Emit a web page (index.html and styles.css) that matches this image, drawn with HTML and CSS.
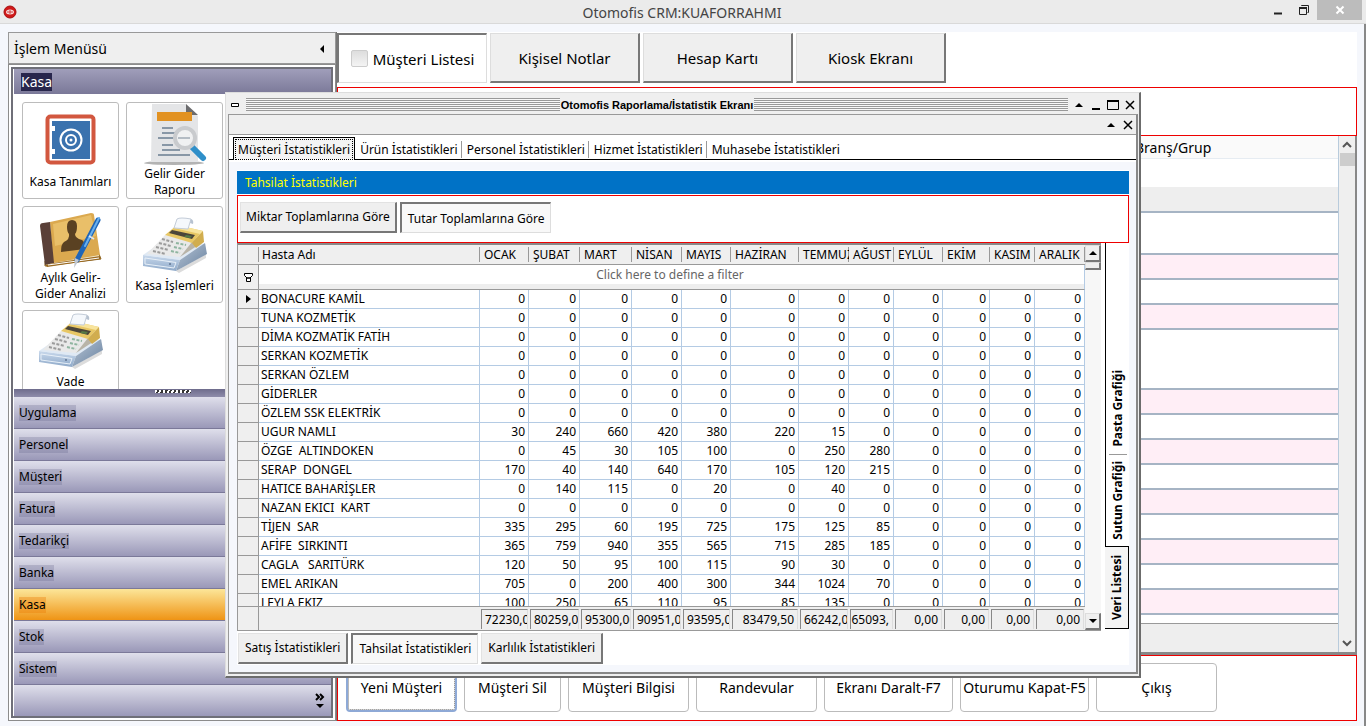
FILE: index.html
```
<!DOCTYPE html>
<html lang="tr">
<head>
    <meta charset="UTF-8">
    <meta name="viewport" content="width=device-width, initial-scale=1.0">
    <link rel="stylesheet" href="styles.css">
    <title>Otomofis CRM</title>
</head>
<body>
    <!-- Ortak ikonlar -->
    <svg class="sprites" aria-hidden="true">
        <defs>
            <linearGradient id="baseFront" x1="0" y1="0" x2="0" y2="1">
                <stop offset="0" stop-color="#c9d9ec"/>
                <stop offset="1" stop-color="#8ea9c9"/>
            </linearGradient>
            <linearGradient id="baseSide" x1="0" y1="0" x2="1" y2="1">
                <stop offset="0" stop-color="#b9c6d6"/>
                <stop offset="1" stop-color="#67819f"/>
            </linearGradient>
            <symbol id="icon-register" viewBox="0 0 64 64">
                <path d="M33 57 L63 40 L63 44 L36 59z" fill="#dcdcdc"/>
                <path d="M0 41 L22 26 L63 30 L37 46z" fill="#dfe9f4"/>
                <path d="M0 41 L37 46 L33 57 L0 52z" fill="url(#baseFront)"/>
                <path d="M37 46 L62 29 L64 40 L33 57z" fill="url(#baseSide)"/>
                <path d="M2 44 L33 48.500 L31 54 L2 50z" fill="none" stroke="#e8f0f8"/>
                <circle cx="27" cy="50" r="1" fill="#5f7590"/>
                <path d="M4 40 L22 21 L49 28 L37 43z" fill="#e9e9e9"/>
                <path d="M37 43 L49 28 L60 18 L60 28z" fill="#b9b4a8"/>
                <path d="M22 21 L34 11 L60 17 L49 29z" fill="#e8c765"/>
                <path d="M34 11 L60 17 L57 20 L31 14z" fill="#f8e49d"/>
                <path d="M26 19 L29 16 L52 21 L49 25z" fill="#4c463a"/>
                <path d="M43 21 L49 22 L47 24 L41 23z" fill="#567a46"/>
                <path d="M49 29 L60 17 L61 28 L53 34z" fill="#d1ad4e"/>
                <path d="M31 14 L34 5 Q37 3 48 5 L45 15z" fill="#f5f8fc" stroke="#c3ccd8"/>
                <path d="M48 5 Q51 6 50 10 L47 9" fill="#b7c2d0"/>
                <g stroke="#9b9b9b" stroke-width="2" stroke-dasharray="3 1.500">
                    <path d="M19 25 L30 28"/>
                    <path d="M16 29 L28 32"/>
                    <path d="M13 33 L26 36"/>
                    <path d="M10 37 L23 40"/>
                </g>
                <g stroke="#8fb5a0" stroke-width="2" stroke-dasharray="3 1.500">
                    <path d="M33 29 L43 31"/>
                    <path d="M31 33 L40 35"/>
                    <path d="M28 37 L37 39"/>
                </g>
            </symbol>
        </defs>
    </svg>

    <!-- Başlık çubuğu -->
    <header class="titlebar">
        <svg class="app-icon" viewBox="0 0 14 14" aria-hidden="true">
            <circle cx="7" cy="7" r="6" fill="#d01818" stroke="#a80c0c"/>
            <path d="M3 7 Q3 4.500 7 4.500 T11 7 Q11 9.500 7 9.500 T3 7z" fill="#f6d8d8"/>
            <path d="M4 7h6M7 5v4" stroke="#d04040"/>
        </svg>
        <h1>Otomofis CRM:KUAFORRAHMI</h1>
        <div class="titlebar-buttons">
            <button type="button" aria-label="Küçült">
                <svg viewBox="0 0 12 12"><path d="M2 9.500h8" stroke="#222" stroke-width="2"/></svg>
            </button>
            <button type="button" aria-label="Önceki boyut">
                <svg viewBox="0 0 12 12"><path d="M1.500 4h7v6.500h-7zM3.500 2V1.500h7V8.500h-1" fill="none" stroke="#222"/><path d="M1 4h8" stroke="#222" stroke-width="2"/></svg>
            </button>
            <button type="button" class="close" aria-label="Kapat">
                <svg viewBox="0 0 12 12"><path d="M2.500 2.500l7 7M9.500 2.500l-7 7" stroke="#fff" stroke-width="2"/></svg>
            </button>
        </div>
    </header>

    <div class="workspace">
        <!-- Sol menü -->
        <aside class="sidebar">
            <div class="sidebar-title">
                <span>İşlem Menüsü</span>
                <svg viewBox="0 0 6 8" aria-hidden="true"><path d="M5 0v8L1 4z"/></svg>
            </div>
            <div class="sidebar-body">
                <h2 class="group-title"><span>Kasa</span></h2>
                <div class="tiles">
                    <button type="button" class="tile">
                        <svg viewBox="0 0 64 64" aria-hidden="true">
                            <rect x="8.500" y="6.500" width="46" height="46" rx="3" fill="#fff" stroke="#d2573f" stroke-width="4"/>
                            <path d="M13 11h38v38H13v-5h3v-5h-3V21h3v-5h-3z" fill="#3a72ae"/>
                            <circle cx="32" cy="30" r="10.500" fill="none" stroke="#fff" stroke-width="2"/>
                            <circle cx="32" cy="30" r="5" fill="none" stroke="#fff" stroke-width="2"/>
                            <circle cx="32" cy="30" r="1.500" fill="#fff"/>
                        </svg>
                        <span>Kasa Tanımları</span>
                    </button>
                    <button type="button" class="tile">
                        <svg viewBox="0 0 64 64" aria-hidden="true">
                            <ellipse cx="31" cy="61" rx="30" ry="2" fill="#b3b3b3"/>
                            <path d="M9 2h34l12 12v46H8z" fill="#e4e5e7"/>
                            <path d="M43 2v11h12z" fill="#6c6c6e"/>
                            <path d="M14 10h35v9H14z" fill="#e29222"/>
                            <path d="M19 26h11M19 31h14M15 36h18M19 43h11M19 48h18M15 53h32" stroke="#8897a6" stroke-width="2"/>
                            <path d="M49 45L60 56" stroke="#2f8fc9" stroke-width="6" stroke-linecap="round"/>
                            <circle cx="42" cy="36" r="10" fill="#f0f1f2" stroke="#c9cbce" stroke-width="4"/>
                            <path d="M35 36h12" stroke="#b4bcc4" stroke-width="2"/>
                        </svg>
                        <span>Gelir Gider Raporu</span>
                    </button>
                    <button type="button" class="tile">
                        <svg viewBox="0 0 64 64" aria-hidden="true">
                            <path d="M6 60L62 53L60 48L6 55z" fill="#f3ead0" stroke="#8a6426"/>
                            <path d="M11 16L52 7Q55 7 55 9L61 49L14 57z" fill="#dba94f"/>
                            <path d="M14 18L52 9L57 30L16 40z" fill="#e9bf69"/>
                            <path d="M1 20Q1 17 4 17L11 16L15 57L6 59z" fill="#5a4038"/>
                            <path d="M6 59L15 57L61 50L62 53L8 61z" fill="#9b6a20"/>
                            <path d="M9 59L60 52" stroke="#fff" stroke-width="1"/>
                            <path d="M28 21Q28 14 33 14T38 20Q38 26 36 28Q36 32 43 34Q46 36 46 43L22 46Q22 38 25 36Q31 33 30 28Q28 26 28 21z" fill="#5a4122"/>
                            <path d="M59 14L38 54" stroke="#1f66b8" stroke-width="5" stroke-linecap="round"/>
                            <path d="M60 12L46 40" stroke="#69b0ee" stroke-width="2" stroke-linecap="round"/>
                            <path d="M50 30l5 3" stroke="#dfe6ee" stroke-width="2"/>
                            <path d="M36 52l4 2L35 62z" fill="#c2c8d0"/>
                        </svg>
                        <span>Aylık Gelir-Gider Analizi</span>
                    </button>
                    <button type="button" class="tile">
                        <svg aria-hidden="true"><use href="#icon-register"/></svg>
                        <span>Kasa İşlemleri</span>
                    </button>
                    <button type="button" class="tile two-lines">
                        <svg aria-hidden="true"><use href="#icon-register"/></svg>
                        <span>Vade</span>
                    </button>
                </div>
                <div class="splitter"></div>
                <nav class="groups">
                    <a href="#uygulama"><span>Uygulama</span></a>
                    <a href="#personel"><span>Personel</span></a>
                    <a href="#musteri"><span>Müşteri</span></a>
                    <a href="#fatura"><span>Fatura</span></a>
                    <a href="#tedarikci"><span>Tedarikçi</span></a>
                    <a href="#banka"><span>Banka</span></a>
                    <a href="#kasa" class="active"><span>Kasa</span></a>
                    <a href="#stok"><span>Stok</span></a>
                    <a href="#sistem"><span>Sistem</span></a>
                </nav>
                <div class="groups-more">
                    <button type="button" aria-label="Diğer">
                        <svg viewBox="0 0 10 16"><path d="M1 1l3 3-3 3M5 1l3 3-3 3" fill="none" stroke="#000" stroke-width="2"/><path d="M1 11h8l-4 4z"/></svg>
                    </button>
                </div>
            </div>
        </aside>

        <!-- Müşteri listesi -->
        <main class="main">
            <div class="main-tabs">
                <button type="button" class="active"><i class="tab-box"></i>Müşteri Listesi</button>
                <button type="button">Kişisel Notlar</button>
                <button type="button">Hesap Kartı</button>
                <button type="button">Kiosk Ekranı</button>
            </div>
            <div class="search-panel"></div>
            <div class="customers">
                <div class="customers-view">
                    <table class="customer-table">
                        <thead>
                            <tr><th></th><th class="branch">Branş/Grup</th></tr>
                        </thead>
                        <tbody>
                            <tr class="filter"><td></td><td></td></tr>
                            <tr class="group"><td></td><td></td></tr>
                            <tr class="medium"><td></td><td></td></tr>
                            <tr class="pink"><td></td><td></td></tr>
                            <tr><td></td><td></td></tr>
                            <tr class="pink"><td></td><td></td></tr>
                            <tr class="tall"><td></td><td></td></tr>
                            <tr class="pink"><td></td><td></td></tr>
                            <tr><td></td><td></td></tr>
                            <tr class="pink"><td></td><td></td></tr>
                            <tr><td></td><td></td></tr>
                            <tr class="pink"><td></td><td></td></tr>
                            <tr><td></td><td></td></tr>
                            <tr class="pink"><td></td><td></td></tr>
                            <tr><td></td><td></td></tr>
                            <tr class="pink"><td></td><td></td></tr>
                        </tbody>
                    </table>
                    <div class="customer-footer"></div>
                </div>
                <div class="scroll-flat">
                    <svg viewBox="0 0 10 8"><path d="M1 6l4-4 4 4" fill="none" stroke="#555" stroke-width="2"/></svg>
                    <i class="thumb"></i>
                    <svg class="down" viewBox="0 0 10 8"><path d="M1 2l4 4 4-4" fill="none" stroke="#555" stroke-width="2"/></svg>
                </div>
            </div>
            <div class="actions">
                <button type="button" class="focused">Yeni Müşteri</button>
                <button type="button" class="narrow">Müşteri Sil</button>
                <button type="button">Müşteri Bilgisi</button>
                <button type="button">Randevular</button>
                <button type="button" class="wide">Ekranı Daralt-F7</button>
                <button type="button" class="wide">Oturumu Kapat-F5</button>
                <button type="button">Çıkış</button>
            </div>
        </main>
    </div>

    <!-- Rapor penceresi -->
    <section class="window">
        <div class="window-title">
            <svg class="sys" viewBox="0 0 8 4" aria-hidden="true"><path d="M.5.5h7v3h-7z" fill="#fff" stroke="#000"/></svg>
            <i class="stripes"></i>
            <h2>Otomofis Raporlama/İstatistik Ekranı</h2>
            <i class="stripes"></i>
            <button type="button" aria-label="Topla"><svg viewBox="0 0 12 12"><path d="M2 8h8L6 4z"/></svg></button>
            <button type="button" aria-label="Küçült"><svg viewBox="0 0 12 12"><path d="M2 10h8" stroke="#000" stroke-width="2"/></svg></button>
            <button type="button" aria-label="Büyüt"><svg viewBox="0 0 12 12"><path d="M.5 1.500h11v9H.5z" fill="none" stroke="#000"/><path d="M0 2h12" stroke="#000" stroke-width="2"/></svg></button>
            <button type="button" aria-label="Kapat"><svg viewBox="0 0 12 12"><path d="M2 2l8 8M10 2l-8 8" stroke="#000" stroke-width="1.500"/></svg></button>
        </div>
        <div class="window-body">
            <div class="dock-title">
                <button type="button" aria-label="Topla"><svg viewBox="0 0 12 12"><path d="M2 8h8L6 4z"/></svg></button>
                <button type="button" aria-label="Kapat"><svg viewBox="0 0 12 12"><path d="M2 2l8 8M10 2l-8 8" stroke="#000" stroke-width="1.500"/></svg></button>
            </div>
            <div class="stat-tabs">
                <button type="button" class="active"><span>Müşteri İstatistikleri</span></button>
                <button type="button">Ürün İstatistikleri</button>
                <button type="button">Personel İstatistikleri</button>
                <button type="button">Hizmet İstatistikleri</button>
                <button type="button">Muhasebe İstatistikleri</button>
            </div>
            <div class="page">
                <h3 class="page-title">Tahsilat İstatistikleri</h3>
                <div class="totals">
                    <button type="button" class="raised">Miktar Toplamlarına Göre</button>
                    <button type="button" class="raised pressed">Tutar Toplamlarına Göre</button>
                </div>
                <div class="report">
                    <div class="grid">
                        <div class="grid-view">
                            <div class="grid-rows">
                                <table class="grid-table">
                                    <thead>
                                        <tr id="grid-head"></tr>
                                        <tr class="filter-row">
                                            <td class="mark"><svg viewBox="0 0 9 9"><path d="M.5.5h8v2L6 5H3L.5 2.500zM2.500 5h4v3.500h-4z" fill="#fff" stroke="#000"/></svg></td>
                                            <td colspan="13">Click here to define a filter</td>
                                        </tr>
                                    </thead>
                                    <tbody id="grid-body"></tbody>
                                </table>
                            </div>
                            <table class="grid-table grid-totals">
                                <tbody><tr id="grid-foot"></tr></tbody>
                            </table>
                        </div>
                        <div class="scroll-classic">
                            <button type="button" aria-label="Yukarı"><svg viewBox="0 0 8 4"><path d="M0 4h8L4 0z"/></svg></button>
                            <i class="thumb"></i>
                            <button type="button" class="down" aria-label="Aşağı"><svg viewBox="0 0 8 4"><path d="M0 0h8L4 4z"/></svg></button>
                        </div>
                    </div>
                    <div class="side-tabs">
                        <i class="rest"></i>
                        <button type="button"><span>Pasta Grafiği</span></button>
                        <button type="button" class="line"><span>Sutun Grafiği</span></button>
                        <button type="button" class="active"><span>Veri Listesi</span></button>
                    </div>
                </div>
                <div class="bottom-tabs">
                    <button type="button" class="raised">Satış İstatistikleri</button>
                    <button type="button" class="raised pressed">Tahsilat İstatistikleri</button>
                    <button type="button" class="raised">Karlılık İstatistikleri</button>
                </div>
            </div>
        </div>
    </section>

    <script>
        const columns = ['OCAK', 'ŞUBAT', 'MART', 'NİSAN', 'MAYIS', 'HAZİRAN', 'TEMMUZ', 'AĞUST', 'EYLÜL', 'EKİM', 'KASIM', 'ARALIK'];
        const widths = [49, 51, 52, 50, 49, 68, 50, 45, 49, 47, 45, 50];

        // Eylül - Aralık arası henüz tahsilat yok
        const rows = [
            ['BONACURE KAMİL', 0, 0, 0, 0, 0, 0, 0, 0],
            ['TUNA KOZMETİK', 0, 0, 0, 0, 0, 0, 0, 0],
            ['DİMA KOZMATİK FATİH', 0, 0, 0, 0, 0, 0, 0, 0],
            ['SERKAN KOZMETİK', 0, 0, 0, 0, 0, 0, 0, 0],
            ['SERKAN ÖZLEM', 0, 0, 0, 0, 0, 0, 0, 0],
            ['GİDERLER', 0, 0, 0, 0, 0, 0, 0, 0],
            ['ÖZLEM SSK ELEKTRİK', 0, 0, 0, 0, 0, 0, 0, 0],
            ['UGUR NAMLI', 30, 240, 660, 420, 380, 220, 15, 0],
            ['ÖZGE  ALTINDOKEN', 0, 45, 30, 105, 100, 0, 250, 280],
            ['SERAP  DONGEL', 170, 40, 140, 640, 170, 105, 120, 215],
            ['HATICE BAHARİŞLER', 0, 140, 115, 0, 20, 0, 40, 0],
            ['NAZAN EKICI  KART', 0, 0, 0, 0, 0, 0, 0, 0],
            ['TİJEN  SAR', 335, 295, 60, 195, 725, 175, 125, 85],
            ['AFİFE  SIRKINTI', 365, 759, 940, 355, 565, 715, 285, 185],
            ['CAGLA   SARITÜRK', 120, 50, 95, 100, 115, 90, 30, 0],
            ['EMEL ARIKAN', 705, 0, 200, 400, 300, 344, 1024, 70],
            ['LEYLA EKIZ', 100, 250, 65, 110, 95, 85, 135, 0]
        ];
        const totals = ['72230,00', '80259,00', '95300,00', '90951,00', '93595,00', '83479,50', '66242,00', '65093,', '0,00', '0,00', '0,00', '0,00'];

        // Sütun genişlikleri iki tabloda da aynı
        document.querySelectorAll('.grid-table').forEach(table => {
            const group = document.createElement('colgroup');
            group.innerHTML = '<col class="col-mark"><col>' + widths.map(w => `<col style="width: ${w}px">`).join('');
            table.prepend(group);
        });

        document.getElementById('grid-head').innerHTML =
            '<th></th><th>Hasta Adı</th>' + columns.map(c => `<th>${c}</th>`).join('');

        document.getElementById('grid-body').innerHTML = rows.map((row, index) => {
            const [name, ...values] = row;
            const cells = [...values, 0, 0, 0, 0];
            const arrow = index === 0 ? '<svg viewBox="0 0 5 8"><path d="M0 0v8l5-4z"/></svg>' : '';
            return `<tr><td class="mark">${arrow}</td><td class="name">${name}</td>` +
                cells.map(v => `<td>${v}</td>`).join('') + '</tr>';
        }).join('');

        // Dar sütunlarda toplam soldan başlar
        document.getElementById('grid-foot').innerHTML =
            '<td class="mark"></td><td></td>' +
            totals.map((t, i) => `<td><div class="${t.length > 7 && widths[i] < 60 ? 'total cut' : 'total'}">${t}</div></td>`).join('');
    </script>
</body>
</html>
```
FILE: styles.css
```
* {
    box-sizing: border-box;
}

body {
    font-family: 'Noto Sans', 'Open Sans', sans-serif;
    font-size: 12px;
    color: #000;
    margin: 0;
    height: 100vh;
    display: flex;
    flex-direction: column;
    overflow: hidden;
    position: relative;
}

h1, h2, h3 {
    margin: 0;
    font-weight: normal;
}

button {
    font: inherit;
    color: inherit;
    padding: 0;
    border: none;
    background: none;
    white-space: nowrap;
}

svg {
    display: block;
}

.sprites {
    position: absolute;
    width: 0;
    height: 0;
}

/* Başlık çubuğu */
.titlebar {
    display: flex;
    align-items: center;
    height: 24px;
    flex: none;
    background-color: #ebebeb;
    border-bottom: 1px solid #d9d9d9;
    padding: 0 4px 0 3px;
}

.app-icon {
    width: 14px;
    height: 14px;
}

.titlebar h1 {
    flex: 1;
    text-align: center;
    font-size: 14px;
    line-height: 20px;
    color: #444;
    padding: 2px 0 0 82px;
}

.titlebar-buttons {
    display: flex;
    align-items: center;
    align-self: flex-start;
}

.titlebar-buttons button {
    width: 26px;
    height: 20px;
    display: flex;
    align-items: center;
    justify-content: center;
}

.titlebar-buttons svg {
    width: 12px;
    height: 12px;
}

.titlebar-buttons .close {
    width: 45px;
    background-color: #bcbcbc;
}

.workspace {
    flex: 1;
    min-height: 0;
    display: flex;
    margin-right: 2px;
    background-color: #fff;
    border: solid #f5f7fc;
    border-width: 8px 7px 5px 8px;
    box-shadow: 2px 0 #888;
}

/* Menü */
.sidebar {
    width: 329px;
    flex: none;
    display: flex;
    flex-direction: column;
    border-right: 1px solid #777;
}

.sidebar-title {
    height: 32px;
    display: flex;
    align-items: center;
    justify-content: space-between;
    padding: 1px 10px 0 5px;
    font-size: 14px;
    background-color: #efefef;
    border: 1px solid #999;
}

.sidebar-title svg {
    width: 6px;
    height: 8px;
}

.sidebar-body {
    flex: 1;
    min-height: 0;
    display: flex;
    flex-direction: column;
    border: 1px solid #8c8c8c;
    outline: 2px solid #6f6f78;
    outline-offset: -5px;
    padding: 4px 4px 3px 5px;
}

.group-title {
    height: 25px;
    flex: none;
    display: flex;
    align-items: center;
    padding-left: 7px;
    font-size: 14px;
    line-height: 18px;
    color: #fff;
    background: linear-gradient(#a09eba, #7a7898);
}

.group-title span {
    background-color: #28264c;
}

.tiles {
    flex: 1;
    min-height: 0;
    overflow: hidden;
    display: grid;
    grid-template-columns: repeat(2, 97px);
    grid-auto-rows: 97px;
    gap: 7px;
    padding: 8px 8px 0;
}

.tile {
    display: flex;
    flex-direction: column;
    align-items: center;
    justify-content: center;
    padding-bottom: 2px;
    border: 1px solid #bcbcbc;
    border-radius: 3px;
    line-height: 16px;
    white-space: normal;
}

.tile svg {
    width: 64px;
    height: 64px;
    flex: none;
}

.tile span {
    max-width: 90px;
}

.tile.two-lines span {
    min-height: 32px;
}

.splitter {
    height: 8px;
    flex: none;
    display: flex;
    justify-content: center;
    background: linear-gradient(#6e6c8c, #8e8caa);
}

.splitter::after {
    content: "";
    width: 36px;
    height: 3px;
    margin-top: 1px;
    background: repeating-linear-gradient(110deg, #fff 0 2px, #333 2px 4px);
}

.groups a, .groups-more {
    height: 32px;
    display: flex;
    align-items: center;
    padding-left: 5px;
    line-height: 16px;
    color: #000;
    text-decoration: none;
    background: linear-gradient(#dfdfeb, #9a98b8);
    border-bottom: 1px solid #7b7999;
}

.groups span {
    background-color: rgba(90, 90, 130, 0.25);
}

.groups a.active {
    background: linear-gradient(#fce699, #ef9415);
}

.groups a.active span {
    background-color: rgba(235, 120, 0, 0.35);
}

.groups-more {
    flex: none;
    justify-content: flex-end;
    padding-right: 6px;
}

.groups-more svg {
    width: 10px;
    height: 16px;
}

/* Sağ taraf */
.main {
    flex: 1;
    min-width: 0;
    display: flex;
    flex-direction: column;
}

.main-tabs {
    display: flex;
    gap: 3px;
    height: 55px;
    flex: none;
    padding: 1px 0 4px;
    font-size: 15px;
}

.main-tabs button {
    width: 150px;
    background-color: #efefef;
    border: 1px solid #ddd;
    border-right: 2px solid #777;
    border-bottom: 2px solid #777;
}

.main-tabs button.active {
    display: flex;
    align-items: center;
    justify-content: center;
    gap: 5px;
    background-color: #fff;
    border: 1px solid #ddd;
    border-top: 2px solid #777;
    border-left: 2px solid #777;
}

.tab-box {
    width: 17px;
    height: 17px;
    border: 1px solid #ccc;
    border-radius: 2px;
    background: linear-gradient(#ddd, #f4f4f4);
}

.search-panel {
    height: 49px;
    flex: none;
    border: 1px solid #e00;
}

.customers {
    flex: 1;
    min-height: 0;
    display: flex;
    border-right: 2px solid #888;
    border-bottom: 3px solid #888;
}

.customers-view {
    flex: 1;
    display: flex;
    flex-direction: column;
    min-height: 0;
    overflow: hidden;
    border-right: 1px solid #b8cbdc;
}

.customer-table {
    width: 100%;
    table-layout: fixed;
    border-collapse: collapse;
}

.customer-table th {
    height: 22px;
    padding: 2px 0 0 3px;
    font-weight: normal;
    font-size: 14px;
    line-height: 18px;
    text-align: left;
    background-color: #fafafa;
    border-bottom: 1px solid #e6ecf2;
}

.customer-table th.branch {
    width: 206px;
}

.customer-table td {
    height: 25px;
    padding: 0;
    border-bottom: 2px solid #a6b4c4;
}

.customer-table .filter td {
    height: 29px;
    border-bottom: 1px solid #eee;
}

.customer-table .group td {
    background-color: #eee;
}

.customer-table .pink td {
    background-color: #ffeef6;
}

.customer-table .medium td {
    height: 42px;
}

.customer-table .tall td {
    height: 60px;
}

.customer-footer {
    height: 29px;
    flex: none;
    margin-top: auto;
    background-color: #eee;
    border-top: 1px solid #999;
}

.scroll-flat {
    width: 16px;
    display: flex;
    flex-direction: column;
    align-items: center;
    padding: 5px 0;
    background-color: #efefef;
}

.scroll-flat svg {
    width: 10px;
    height: 8px;
}

.scroll-flat .thumb {
    width: 15px;
    height: 13px;
    margin-top: 4px;
    background-color: #cdcdcd;
}

.scroll-flat .down {
    margin-top: auto;
}

.actions {
    height: 66px;
    flex: none;
    display: flex;
    gap: 7px;
    padding: 7px 7px 8px 8px;
    font-size: 14px;
    border: 1px solid #e00;
}

.actions button {
    width: 121px;
    border: 1px solid #bbb;
    border-radius: 4px;
}

.actions button.focused {
    width: 111px;
    border: 2px solid #8ea9d6;
    outline: 1px dotted #777;
    outline-offset: -3px;
}

.actions button.narrow {
    width: 97px;
}

.actions button.wide {
    width: 129px;
}

/* Rapor penceresi */
.window {
    position: absolute;
    z-index: 1;
    top: 92px;
    right: 225px;
    bottom: 48px;
    left: 225px;
    display: flex;
    flex-direction: column;
    padding: 2px 1px 2px 2px;
    background-color: #efefef;
    border: 1px solid #ddd;
    border-right: 2px solid #6c6c6c;
    border-bottom: 2px solid #6c6c6c;
}

.window-title {
    height: 19px;
    flex: none;
    display: flex;
    align-items: center;
    padding: 0 0 0 3px;
}

.window-title .sys {
    width: 8px;
    height: 4px;
}

.window-title h2 {
    font: bold 11px 'Liberation Sans', Arial, sans-serif;
    padding: 0 1px;
}

.stripes {
    flex: 1;
    height: 13px;
    background: repeating-linear-gradient(#999 0 1px, #f8f8f8 1px 2px);
}

.sys + .stripes {
    margin-left: 7px;
}

.window-title button, .dock-title button {
    width: 17px;
    height: 16px;
    display: flex;
    align-items: center;
    justify-content: center;
}

.window-title svg:not(.sys), .dock-title svg {
    width: 12px;
    height: 12px;
}

.window-title h2 + .stripes {
    margin-right: 2px;
}

.window-body {
    flex: 1;
    min-height: 0;
    display: flex;
    flex-direction: column;
    background-color: #fff;
    border: 1px solid #999;
    border-right: 2px solid #888;
    border-bottom: 2px solid #888;
}

.dock-title {
    height: 20px;
    flex: none;
    display: flex;
    align-items: center;
    justify-content: flex-end;
    background-color: #efefef;
    border-bottom: 1px solid #999;
}

.stat-tabs {
    height: 25px;
    flex: none;
    display: flex;
    align-items: flex-end;
    padding-left: 4px;
    border-bottom: 1px solid #000;
}

.stat-tabs button {
    height: 17px;
    margin-bottom: 1px;
    padding: 0 3px 0 5px;
    line-height: 16px;
    border-right: 1px solid #999;
}

.stat-tabs button:last-child {
    border-right: none;
}

.stat-tabs button.active {
    height: 23px;
    margin-bottom: -1px;
    padding: 1px;
    background-color: #f4f4f4;
    border: 1px solid #000;
    border-bottom: none;
}

.stat-tabs .active span {
    display: block;
    padding: 2px 2px 1px;
    border: 1px dotted #000;
}

.page {
    flex: 1;
    min-height: 0;
    display: flex;
    flex-direction: column;
    margin-top: 2px;
    padding: 1px 0;
    border: solid #f5f7fc;
    border-width: 8px 7px 7px 8px;
}

.page-title {
    height: 23px;
    flex: none;
    padding-left: 8px;
    font-size: 12px;
    line-height: 23px;
    color: #ff0;
    background-color: #0072c6;
}

.totals {
    height: 48px;
    flex: none;
    display: flex;
    gap: 3px;
    margin-top: 1px;
    padding: 6px 2px 9px;
    border: 1px solid #e00;
}

.raised {
    padding: 0 6px 1px;
    background-color: #efefef;
    border: 1px solid #e2e2e2;
    border-right: 2px solid #777;
    border-bottom: 2px solid #777;
}

.totals .raised {
    padding: 0 5px 1px;
}

.totals .pressed {
    padding: 0 6px;
}

.raised.pressed {
    background-color: #f8f8f8;
    border: 1px solid #ddd;
    border-top: 2px solid #777;
    border-left: 2px solid #777;
}

.report {
    flex: 1;
    min-height: 0;
    display: flex;
    gap: 4px;
}

.grid {
    flex: 1;
    min-width: 0;
    display: flex;
    border: 1px solid #999;
    border-top: 2px solid #888;
    border-right: none;
}

.grid-view {
    flex: 1;
    min-width: 0;
    display: flex;
    flex-direction: column;
}

.grid-rows {
    flex: 1;
    min-height: 0;
    overflow: hidden;
}

.grid-table {
    width: 100%;
    table-layout: fixed;
    border-collapse: separate;
    border-spacing: 0;
    line-height: 16px;
}

.col-mark {
    width: 21px;
}

.grid-table th {
    height: 20px;
    padding: 0 0 0 4px;
    font-weight: normal;
    text-align: left;
    white-space: nowrap;
    overflow: hidden;
    background: linear-gradient(#999, #999) right / 1px 15px no-repeat #efefef;
    border-bottom: 1px solid #999;
}

.grid-table th:nth-child(2) {
    padding-left: 3px;
}

.grid-table td {
    height: 19px;
    padding: 0 3px 0 0;
    text-align: right;
    white-space: pre;
    border-right: 1px solid #b4cbe4;
    border-bottom: 1px solid #b4cbe4;
}

.grid-table td.name {
    padding: 0 0 0 2px;
    text-align: left;
}

.grid-table td.mark {
    padding: 0;
    background-color: #efefef;
    border-color: #999;
}

.mark svg {
    width: 5px;
    height: 8px;
    margin: 0 auto;
}

.filter-row .mark svg {
    width: 9px;
    height: 9px;
}

.grid-table .filter-row td {
    height: 25px;
    text-align: center;
    border-bottom-color: #999;
}

.grid-table .filter-row td:last-child {
    padding-bottom: 5px;
    color: #666;
    background: linear-gradient(#fff 19px, #eee 19px);
}

.grid-totals {
    flex: none;
    background-color: #efefef;
    border-top: 1px solid #999;
}

.grid-table.grid-totals td {
    height: 23px;
    padding: 0 1px;
    border-right: none;
    border-bottom: none;
}

.grid-table.grid-totals td.mark {
    border-right: 1px solid #999;
}

.total {
    height: 20px;
    padding-right: 3px;
    line-height: 19px;
    overflow: hidden;
    border-top: 1px solid #888;
    border-left: 1px solid #888;
    border-right: 1px solid #ddd;
}

.total.cut {
    padding: 0 0 0 3px;
    text-align: left;
}

.scroll-classic {
    width: 16px;
    flex: none;
    display: flex;
    flex-direction: column;
    background-color: #f7f7f7;
}

.scroll-classic button {
    height: 17px;
    display: flex;
    align-items: center;
    justify-content: center;
}

.scroll-classic button, .scroll-classic .thumb {
    background-color: #efefef;
    border: 1px solid #ddd;
    border-right: 2px solid #777;
    border-bottom: 2px solid #777;
}

.scroll-classic svg {
    width: 8px;
    height: 4px;
}

.scroll-classic .thumb {
    height: 8px;
}

.scroll-classic .down {
    margin-top: auto;
}

.side-tabs {
    width: 24px;
    flex: none;
    display: flex;
    flex-direction: column;
    padding-bottom: 2px;
    font-weight: bold;
}

.side-tabs .rest {
    flex: 1;
    border-left: 1px solid #000;
}

.side-tabs button {
    height: 92px;
    display: flex;
    align-items: center;
    justify-content: center;
    border-left: 1px solid #000;
}

.side-tabs button.line {
    background: linear-gradient(#999, #999) center top / 18px 1px no-repeat;
}

.side-tabs button.active {
    height: 83px;
    background-color: #f4f4f4;
    border: 1px solid #000;
    border-left: none;
}

.side-tabs span {
    writing-mode: vertical-rl;
    transform: rotate(180deg);
}

.bottom-tabs {
    height: 33px;
    flex: none;
    display: flex;
    gap: 3px;
    padding: 2px 0 0 1px;
}
```
